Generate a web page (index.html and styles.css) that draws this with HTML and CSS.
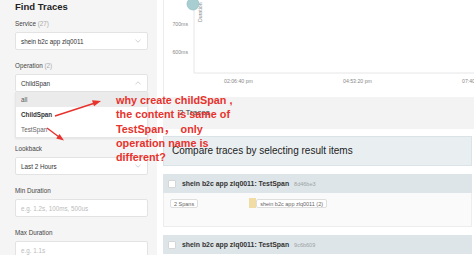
FILE: index.html
```html
<!DOCTYPE html>
<html lang="en">
<head>
    <meta charset="UTF-8">
    <meta name="viewport" content="width=device-width, initial-scale=1.0">
    <title>Find Traces</title>
    <link rel="stylesheet" href="styles.css">
</head>
<body>
    <div class="sidebar">
        <h1 class="title">Find Traces</h1>

        <div class="field first">
            <div class="label">Service <span class="count">(27)</span></div>
            <div class="select">
                <span>shein b2c app zlq0011</span>
                <svg class="chev" width="6" height="4" viewBox="0 0 6 4"><polyline points="0.5,0.8 3,3.2 5.5,0.8"/></svg>
            </div>
        </div>

        <div class="field">
            <div class="label">Operation <span class="count">(2)</span></div>
            <div class="select open">
                <span>ChildSpan</span>
                <svg class="chev" width="6" height="4" viewBox="0 0 6 4"><polyline points="0.5,3.2 3,0.8 5.5,3.2"/></svg>
            </div>
            <div class="menu">
                <div class="option active">all</div>
                <div class="option selected">ChildSpan</div>
                <div class="option">TestSpan</div>
            </div>
        </div>

        <div class="field near">
            <div class="label">Lookback</div>
            <div class="select">
                <span>Last 2 Hours</span>
                <svg class="chev" width="6" height="4" viewBox="0 0 6 4"><polyline points="0.5,0.8 3,3.2 5.5,0.8"/></svg>
            </div>
        </div>

        <div class="field">
            <div class="label">Min Duration</div>
            <div class="select input">e.g. 1.2s, 100ms, 500us</div>
        </div>

        <div class="field">
            <div class="label">Max Duration</div>
            <div class="select input">e.g. 1.1s</div>
        </div>
    </div>

    <div class="main">
        <div class="chart">
            <svg width="312" height="97" viewBox="0 0 312 97">
                <line class="axis" x1="30" y1="0" x2="30" y2="73"/>
                <line class="axis" x1="30" y1="73" x2="312" y2="73"/>
                <text class="tick" x="24" y="26" text-anchor="end">700ms</text>
                <text class="tick" x="24" y="54" text-anchor="end">600ms</text>
                <text class="tick" x="60" y="83">02:06:40 pm</text>
                <text class="tick" x="179" y="83">04:53:20 pm</text>
                <text class="tick" x="298" y="83">07:40:00 pm</text>
                <text class="tick" transform="translate(38,22) rotate(-90)">Duration</text>
                <circle cx="29" cy="4" r="6" fill="#a9ced1" stroke="#93c1c5" stroke-width="0.8"/>
            </svg>
        </div>

        <div class="results-bar">2 Traces</div>

        <div class="compare">Compare traces by selecting result items</div>

        <div class="trace">
            <div class="trace-head">
                <span class="check"></span>
                <span class="trace-name">shein b2c app zlq0011: TestSpan</span>
                <span class="trace-id">8d46be3</span>
            </div>
            <div class="trace-body">
                <span class="tag">2 Spans</span>
                <span class="svc">
                    <span class="swatch"></span>
                    <span class="tag">shein b2c app zlq0011 (2)</span>
                </span>
            </div>
        </div>

        <div class="trace">
            <div class="trace-head">
                <span class="check"></span>
                <span class="trace-name">shein b2c app zlq0011: TestSpan</span>
                <span class="trace-id">9c6b609</span>
            </div>
        </div>
    </div>

    <svg class="arrows" width="474" height="255" viewBox="0 0 474 255">
        <line x1="55" y1="116" x2="95" y2="103"/>
        <polygon points="101,101 92,100.3 94,106.3"/>
        <line x1="47" y1="128" x2="59" y2="137"/>
        <polygon points="64,140.5 56.2,138.6 59.6,134"/>
    </svg>

    <div class="note">why create childSpan ,
the content is same of
TestSpan，  only
operation name is
different?</div>
</body>
</html>
```

FILE: styles.css
```css
body { margin: 0; width: 474px; height: 255px; overflow: hidden; display: flex; position: relative; background: #fff; font-family: "Liberation Sans", Arial, sans-serif; color: #333; }

.sidebar { width: 157px; flex: none; box-sizing: border-box; padding: 0 9px 0 15px; background: #f5f5f5; }
.title { margin: 1px 0 0; font-size: 9.5px; line-height: 12px; font-weight: bold; color: #222; }
.field { margin-top: 12px; }
.field.first { margin-top: 7px; }
.field.near { margin-top: 7px; }
.label { font-size: 6.3px; line-height: 8px; color: #444; margin-bottom: 4px; }
.count { color: #aaa; }
.select { height: 18px; box-sizing: border-box; border: 1px solid #e3e3e3; border-radius: 2px; background: #fff; display: flex; align-items: center; justify-content: space-between; padding: 0 6px 0 5px; font-size: 6.3px; color: #333; }
.select.input { color: #bbb; }
.chev { fill: none; stroke: #c4c4c4; stroke-width: 0.8; }
.menu { background: #fff; border: 1px solid #e6e6e6; border-top: none; box-shadow: 0 1px 2px rgba(0, 0, 0, 0.08); }
.option { height: 15px; line-height: 15px; padding-left: 5px; font-size: 6.3px; color: #666; }
.option.active { background: #ebebeb; color: #555; }
.option.selected { font-weight: bold; color: #333; }

.main { flex: 1; min-width: 0; padding: 0 2px 0 6px; }
.chart { height: 97px; border-left: 1px solid #ececec; margin-right: -2px; background: #fff; }
.chart svg { display: block; }
.axis { stroke: #e6e6e6; stroke-width: 1; }
.tick { font-size: 5.2px; fill: #888; font-family: "Liberation Sans", Arial, sans-serif; }

.results-bar { height: 32px; line-height: 32px; background: #f3f3f3; padding-left: 16px; font-size: 8px; color: #333; margin-right: -2px; }
.compare { margin-top: 7px; height: 30px; line-height: 28px; box-sizing: border-box; background: #e9eff1; border: 1px solid #dae3e6; padding-left: 8px; font-size: 10px; color: #222; }

.trace { margin-top: 8px; }
.trace-head { height: 19px; background: #dee5e8; display: flex; align-items: center; padding-left: 5px; }
.check { width: 8px; height: 8px; box-sizing: border-box; background: #fff; border: 1px solid #d6d6d6; border-radius: 1px; }
.trace-name { margin-left: 6px; font-size: 6.9px; font-weight: bold; color: #333; }
.trace-id { margin-left: 5px; font-size: 5.5px; color: #9aa3a6; }
.trace-body { height: 34px; box-sizing: border-box; background: #fafafa; border: 1px solid #ededed; border-top: none; display: flex; align-items: flex-start; padding: 6px 0 0 6px; }
.tag { display: inline-block; height: 9px; line-height: 8px; box-sizing: border-box; border: 1px solid #dedede; border-radius: 2px; background: #fff; padding: 0 3px; font-size: 5.5px; color: #666; }
.svc { display: flex; align-items: center; margin-left: 51px; margin-top: -1px; }
.swatch { width: 7px; height: 10px; background: #f1dca6; }

.arrows { position: absolute; left: 0; top: 0; pointer-events: none; }
.arrows line { stroke: #e8322c; stroke-width: 1.4; }
.arrows polygon { fill: #e8322c; }

.note { position: absolute; left: 116px; top: 93px; white-space: pre; font-family: "Liberation Sans", Arial, "Noto Sans CJK SC", sans-serif; font-size: 10.8px; line-height: 14.3px; font-weight: bold; color: #e8322c; pointer-events: none; }
```
